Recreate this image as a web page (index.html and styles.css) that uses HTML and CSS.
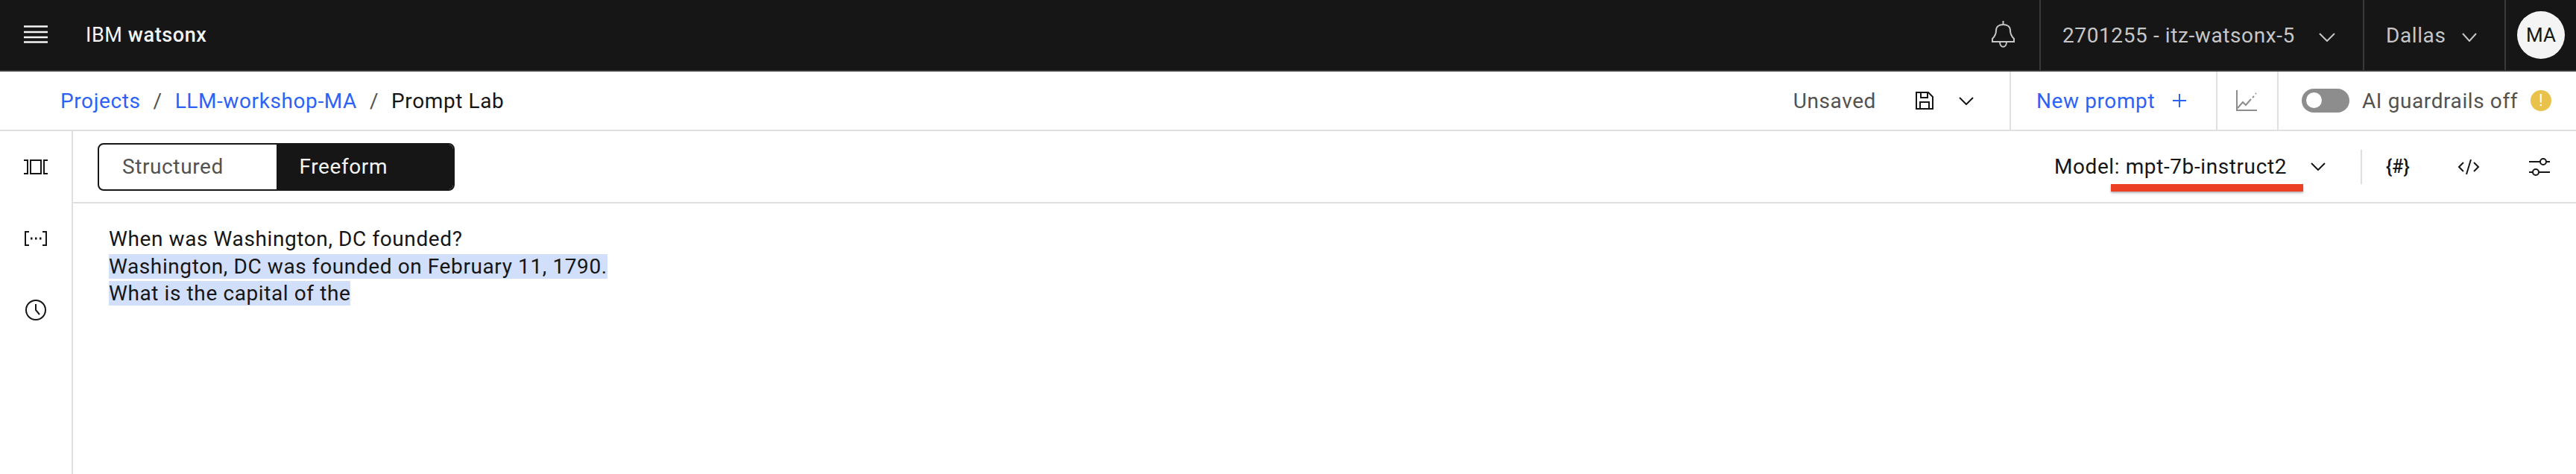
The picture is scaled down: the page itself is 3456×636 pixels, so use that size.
FILE: index.html
```html
<!DOCTYPE html>
<html lang="en">
<head>
    <meta charset="UTF-8">
    <title>Prompt Lab | IBM watsonx</title>
    <link rel="stylesheet" href="styles.css">
</head>
<body>
    <!-- Top black bar -->
    <header class="top-bar">
        <button class="menu-btn" aria-label="Menu">
            <svg width="32" height="24" viewBox="0 0 32 24" fill="none" stroke="#f4f4f4" stroke-width="2.4"><path d="M0 1.500h32M0 9h32M0 16h32M0 22.500h32"/></svg>
        </button>
        <div class="brand">IBM <b>watsonx</b></div>
        <div class="bell-cell">
            <svg width="35" height="38" viewBox="0 0 35 38" fill="none" stroke="#c6c6c6" stroke-width="2"><path d="M17.500 0v5M3 28v-4c3-3 5-6 5-11 0-5 4-8 9.500-8S27 8 27 13c0 5 2 8 5 11v4zM13 28c0 9 9 9 9 0"/></svg>
        </div>
        <div class="top-cell account-cell">
            <span>2701255 - itz-watsonx-5</span>
            <svg class="chev" width="22" height="12" viewBox="0 0 22 12" fill="none" stroke="#c6c6c6" stroke-width="2"><path d="M1 1l10 10L21 1"/></svg>
        </div>
        <div class="top-cell region-cell">
            <span>Dallas</span>
            <svg class="chev" width="20" height="12" viewBox="0 0 20 12" fill="none" stroke="#c6c6c6" stroke-width="2"><path d="M1 1l9 10 9-10"/></svg>
        </div>
        <div class="top-cell avatar-cell">
            <div class="avatar">MA</div>
        </div>
    </header>

    <!-- Breadcrumb bar -->
    <div class="crumb-bar">
        <nav class="crumbs">
            <a href="#">Projects</a>
            <span class="sep">/</span>
            <a href="#">LLM-workshop-MA</a>
            <span class="sep">/</span>
            <span>Prompt Lab</span>
        </nav>
        <div class="crumb-actions save-cell">
            <span class="muted">Unsaved</span>
            <svg class="save-icon" width="24" height="24" viewBox="0 0 24 24" fill="none" stroke="#161616" stroke-width="2"><path d="M1 1h16l6 6v16H1zM7 1v7h9V1M6 23V14h12v9"/></svg>
            <svg width="20" height="11" viewBox="0 0 20 11" fill="none" stroke="#161616" stroke-width="2"><path d="M1 1l9 9 9-9"/></svg>
        </div>
        <div class="crumb-actions new-cell">
            <span>New prompt</span>
            <svg width="18" height="18" viewBox="0 0 18 18" fill="none" stroke="#2d62f6" stroke-width="2"><path d="M9 0v18M0 9h18"/></svg>
        </div>
        <div class="crumb-actions chart-cell">
            <svg width="28" height="28" viewBox="0 0 28 28" fill="none" stroke="#8d8d8d" stroke-width="2"><path d="M1 0v27h27M2 24l7-8 4 4 7-8M22 10l2-2M26 5l1-1"/></svg>
        </div>
        <div class="crumb-actions guard-cell">
            <div class="toggle"><span class="knob"></span></div>
            <span class="muted">AI guardrails off</span>
            <div class="warn">!</div>
        </div>
    </div>

    <div class="workspace">
        <aside class="side">
            <svg width="32" height="20" viewBox="0 0 32 20" fill="none" stroke="#161616" stroke-width="2"><path d="M0 1h5v18H0M9 1h14v18H9zM32 1h-5v18h5"/></svg>
            <svg width="30" height="20" viewBox="0 0 30 20" fill="none" stroke="#161616" stroke-width="2"><path d="M6 1H1v18h5M24 1h5v18h-5"/><path d="M8 10h2.500M14 10h2.500M20 10h2.500" stroke-width="3"/></svg>
            <svg width="28" height="28" viewBox="0 0 28 28" fill="none" stroke="#161616" stroke-width="2"><circle cx="14" cy="14" r="13"/><path d="M14 6v8l5 6"/></svg>
        </aside>
        <main class="editor">
            <div class="toolbar">
                <div class="switcher">
                    <div class="switch-opt">Structured</div>
                    <div class="switch-opt active">Freeform</div>
                </div>
                <div class="model">
                    <span>Model: mpt-7b-instruct2</span>
                    <svg width="20" height="11" viewBox="0 0 20 11" fill="none" stroke="#161616" stroke-width="2"><path d="M1 1l9 9 9-9"/></svg>
                    <div class="red-mark"></div>
                </div>
                <div class="tools">
                    <span class="hash">{#}</span>
                    <svg width="30" height="20" viewBox="0 0 30 20" fill="none" stroke="#161616" stroke-width="2"><path d="M8 4l-6 6 6 6M22 4l6 6-6 6M18 0l-6 20"/></svg>
                    <svg width="28" height="24" viewBox="0 0 28 24" fill="none" stroke="#161616" stroke-width="2"><path d="M0 5h15M23 5h5M0 19h5M13 19h15"/><circle cx="19" cy="5" r="4"/><circle cx="9" cy="19" r="4"/></svg>
                </div>
            </div>
            <div class="prompt">
                <div>When was Washington, DC founded?</div>
                <div><span class="picked">Washington, DC was founded on February 11, 1790.</span></div>
                <div><span class="picked">What is the capital of the</span></div>
            </div>
        </main>
    </div>
</body>
</html>
```

FILE: styles.css
```css
body {
    font-family: 'Roboto', 'Liberation Sans', sans-serif;
    font-size: 28px;
    letter-spacing: 0.6px;
    margin: 0;
    padding: 0;
    background-color: #fff;
    color: #161616;
}

/* Top bar */
.top-bar {
    display: flex;
    align-items: stretch;
    height: 94px;
    background-color: #161616;
    border-bottom: 2px solid #393939;
}

.menu-btn {
    width: 115px;
    padding: 0 0 0 32px;
    border: none;
    background: none;
    text-align: left;
}

.brand {
    flex: 1;
    align-self: center;
    color: #f4f4f4;
    font-size: 27px;
}

.brand b {
    font-weight: 500;
}

.bell-cell {
    display: flex;
    align-items: center;
    padding-right: 31px;
}

.top-cell {
    display: flex;
    align-items: center;
    border-left: 2px solid #393939;
    color: #c6c6c6;
}

.account-cell {
    width: 403px;
    padding-left: 29px;
}

.region-cell {
    width: 159px;
    padding-left: 29px;
}

.chev {
    margin-left: auto;
    margin-top: 6px;
    margin-right: 37px;
}

.avatar-cell {
    width: 96px;
    padding-left: 15px;
    box-sizing: border-box;
}

.avatar {
    width: 64px;
    height: 64px;
    line-height: 64px;
    border-radius: 50%;
    background-color: #f4f4f4;
    color: #161616;
    text-align: center;
    font-size: 26px;
    letter-spacing: 0;
}

/* Breadcrumb bar */
.crumb-bar {
    display: flex;
    align-items: stretch;
    height: 78px;
    border-bottom: 2px solid #e0e0e0;
}

.crumbs {
    flex: 1;
    display: flex;
    align-items: center;
    gap: 17px;
    padding-left: 81px;
}

.crumbs a {
    color: #2d62f6;
    text-decoration: none;
}

.sep {
    color: #525252;
}

.crumb-actions {
    display: flex;
    align-items: center;
}

.muted {
    color: #525252;
}

.save-cell {
    padding-right: 48px;
}

.save-icon {
    margin: 0 34px 0 53px;
}

.new-cell {
    width: 277px;
    box-sizing: border-box;
    padding-left: 34px;
    gap: 24px;
    border-left: 2px solid #e0e0e0;
    color: #2d62f6;
}

.chart-cell {
    width: 82px;
    box-sizing: border-box;
    padding-left: 25px;
    border-left: 2px solid #e0e0e0;
}

.guard-cell {
    width: 401px;
    box-sizing: border-box;
    padding-left: 31px;
    gap: 17px;
    border-left: 2px solid #e0e0e0;
}

.toggle {
    width: 64px;
    height: 32px;
    padding: 5px 0 0 6px;
    box-sizing: border-box;
    border-radius: 16px;
    background-color: #8d8d8d;
}

.knob {
    display: block;
    width: 21px;
    height: 21px;
    border-radius: 50%;
    background-color: #fff;
}

.warn {
    width: 28px;
    height: 28px;
    line-height: 28px;
    border-radius: 50%;
    background-color: #e8c24a;
    color: #fff;
    text-align: center;
    font-size: 22px;
}

/* Main area */
.workspace {
    display: flex;
    height: 460px;
}

.side {
    width: 96px;
    display: flex;
    flex-direction: column;
    align-items: center;
    padding-top: 38px;
    border-right: 2px solid #e0e0e0;
}

.side svg:nth-child(2) {
    margin-top: 76px;
}

.side svg:nth-child(3) {
    margin-top: 72px;
}

.editor {
    flex: 1;
}

.toolbar {
    display: flex;
    align-items: center;
    height: 95px;
    padding-left: 33px;
    border-bottom: 2px solid #e0e0e0;
}

.switcher {
    display: flex;
    width: 479px;
    height: 64px;
    box-sizing: border-box;
    border: 2px solid #161616;
    border-radius: 8px;
    overflow: hidden;
}

.switch-opt {
    flex: 1;
    line-height: 60px;
    padding-left: 31px;
    color: #525252;
}

.switch-opt.active {
    background-color: #161616;
    color: #f4f4f4;
}

.model {
    position: relative;
    display: flex;
    align-items: center;
    gap: 32px;
    margin-left: auto;
    height: 46px;
    padding-right: 47px;
}

.red-mark {
    position: absolute;
    right: 77px;
    top: 46px;
    width: 258px;
    height: 10px;
    background-color: #ec4025;
    box-shadow: 0 2px 3px rgba(0, 0, 0, 0.3);
}

.tools {
    display: flex;
    align-items: center;
    gap: 66px;
    height: 46px;
    padding: 0 35px 0 32px;
    border-left: 2px solid #e0e0e0;
}

.hash {
    width: 30px;
    font-size: 25px;
    font-weight: 500;
    letter-spacing: 0;
    white-space: nowrap;
}

.prompt {
    padding: 30px 0 0 48px;
    line-height: 36.500px;
}

.picked {
    background-color: #d2dffa;
}
```
